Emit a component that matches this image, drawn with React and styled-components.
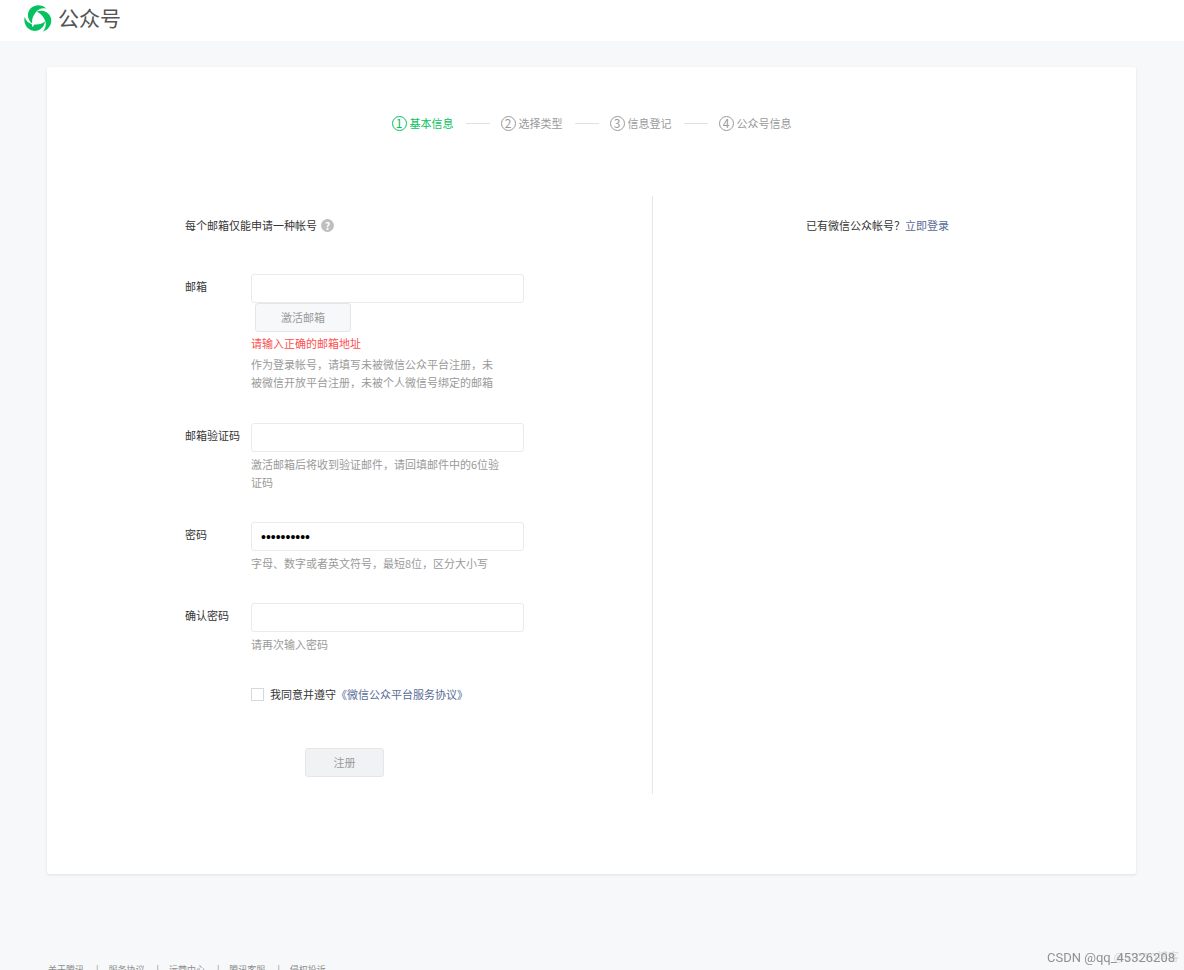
import styled, { createGlobalStyle, css } from 'styled-components';
import { useState } from 'react';

const steps = ['基本信息', '选择类型', '信息登记', '公众号信息'];
const footerLinks = ['关于腾讯', '服务协议', '运营中心', '腾讯客服', '侵权投诉'];

const Logo = () => (
  <LogoMark viewBox='0 0 84 84' aria-hidden='true'>
    {
      [0, 120, 240].map(angle => (
        <path
          key={angle}
          transform={`rotate(${angle} 42 42)`}
          d='M38 20C56 13 74 21 80 37C86 55 76 74 56 80C66 70 68 56 62 44C56 31 49 24 38 20Z'
        />
      ))
    }
    <path d='M22 54L31 58L26 67Z' fill='#fff' />
  </LogoMark>
);

const Field = ({ id, label, type = 'text', hint, error, action, ...rest }) => (
  <Row>
    <Label htmlFor={id}>{label}</Label>
    <Control>
      <Input id={id} type={type} aria-invalid={!!error} {...rest} />
      {action && <ActivateButton type='button' disabled>{action}</ActivateButton>}
      {error && <ErrorText role='alert'>{error}</ErrorText>}
      <Hint>{hint}</Hint>
    </Control>
  </Row>
);

const App = () => {
  const [password, setPassword] = useState('0123456789');
  const [agreed, setAgreed] = useState(false);

  return (
    <Page>
      <GlobalStyle />
      <Header>
        <Logo />
        <Brand>公众号</Brand>
      </Header>

      <Card>
        <Steps>
          {
            steps.map((name, index) => (
              <Step key={name} $active={index === 0}>
                <StepNumber>{index + 1}</StepNumber>
                {name}
              </Step>
            ))
          }
        </Steps>

        <Columns>
          <FormColumn onSubmit={(e) => e.preventDefault()}>
            <Intro>
              每个邮箱仅能申请一种帐号
              <HelpButton type='button' aria-label='帮助'>?</HelpButton>
            </Intro>

            <Field
              id='email'
              label='邮箱'
              action='激活邮箱'
              error='请输入正确的邮箱地址'
              hint='作为登录帐号，请填写未被微信公众平台注册，未被微信开放平台注册，未被个人微信号绑定的邮箱'
            />
            <Field
              id='code'
              label='邮箱验证码'
              hint='激活邮箱后将收到验证邮件，请回填邮件中的6位验证码'
            />
            <Field
              id='password'
              label='密码'
              type='password'
              value={password}
              onChange={(e) => setPassword(e.target.value)}
              hint='字母、数字或者英文符号，最短8位，区分大小写'
            />
            <Field
              id='confirm'
              label='确认密码'
              type='password'
              hint='请再次输入密码'
            />

            <Agreement>
              <Checkbox
                id='agree'
                type='checkbox'
                checked={agreed}
                onChange={(e) => setAgreed(e.target.checked)}
              />
              <label htmlFor='agree'>我同意并遵守</label>
              <Link href='#agreement'>《微信公众平台服务协议》</Link>
            </Agreement>
            <SubmitButton type='submit' disabled={!agreed}>注册</SubmitButton>
          </FormColumn>

          <LoginColumn>
            已有微信公众帐号？<Link href='#login'>立即登录</Link>
          </LoginColumn>
        </Columns>
      </Card>

      <Footer>
        {footerLinks.map(name => <FooterLink key={name} href='#footer'>{name}</FooterLink>)}
      </Footer>

      <Watermark>
        <WatermarkBack>@51CTO博客</WatermarkBack>
        CSDN @qq_45326208
      </Watermark>
    </Page>
  );
};

export default App;

const GlobalStyle = createGlobalStyle`
  * {
    box-sizing: border-box;
  }

  body {
    margin: 0;
    background-color: #f6f8f9;
    color: #353535;
    font-family: 'Noto Sans CJK SC', sans-serif;
    font-size: 11px;
    line-height: 18px;
  }

  button, input {
    font: inherit;
  }

  p {
    margin: 0;
  }
`;

const Page = styled.div`
  height: 100vh;
  overflow-y: auto;
  scrollbar-width: none;
`;

const Header = styled.header`
  display: flex;
  align-items: center;
  gap: 6px;
  height: 41px;
  padding: 0 24px 4px;
  background-color: #fff;
`;

const LogoMark = styled.svg`
  width: 28px;
  height: 28px;
  fill: #07c160;
`;

const Brand = styled.span`
  padding-bottom: 3px;
  color: #555;
  font-size: 21px;
  line-height: 28px;
`;

const Card = styled.main`
  margin: 26px 48px 0 47px;
  padding: 47px 0 80px;
  border-radius: 2px;
  background-color: #fff;
  box-shadow: 0 1px 3px rgba(0, 0, 0, 0.1);
`;

const Steps = styled.ol`
  display: flex;
  justify-content: center;
  margin: 0;
  padding: 0;
  list-style: none;
`;

const Step = styled.li`
  display: flex;
  align-items: center;
  gap: 3px;
  color: ${({ $active }) => ($active ? '#07c160' : '#9a9a9a')};

  &:not(:first-child)::before {
    content: '';
    width: 24px;
    margin: 0 8px 0 12px;
    border-top: 1px solid #e0e1e2;
  }
`;

const StepNumber = styled.span`
  display: flex;
  justify-content: center;
  align-items: center;
  width: 15px;
  height: 15px;
  border: 1px solid currentColor;
  border-radius: 50%;
  font-size: 12px;
  line-height: 12px;
`;

const Columns = styled.div`
  display: grid;
  grid-template-columns: 5fr 4fr;
  margin-top: 64px;
`;

const FormColumn = styled.form`
  padding: 20px 0 17px 138px;
`;

const LoginColumn = styled.aside`
  padding: 20px 0 0 153px;
  border-left: 1px solid #e7e7eb;
`;

const Intro = styled.div`
  display: flex;
  align-items: center;
  gap: 4px;
  margin-bottom: 40px;
`;

const HelpButton = styled.button`
  width: 13px;
  height: 13px;
  padding: 0;
  border: 0;
  border-radius: 50%;
  background-color: #bfbfbf;
  color: #fff;
  font-size: 10px;
  font-weight: 700;
  line-height: 13px;
`;

const Row = styled.div`
  display: flex;
  margin-bottom: 31px;
`;

const Label = styled.label`
  flex: none;
  width: 66px;
  padding-top: 3px;
`;

const Control = styled.div`
  display: flex;
  flex-direction: column;
  align-items: flex-start;
  width: 273px;
`;

const Input = styled.input`
  width: 100%;
  height: 29px;
  padding: 0 9px;
  border: 1px solid #e9eaec;
  border-radius: 3px;
  background-color: #fff;
  color: #000;
  font-family: 'Liberation Sans', 'Noto Sans CJK SC', sans-serif;
  font-size: 14px;
  outline: none;
`;

const buttonStyle = css`
  height: 29px;
  padding: 0 0 2px;
  border: 1px solid #e4e6e9;
  border-radius: 3px;
  color: #9a9a9a;
`;

const ActivateButton = styled.button`
  ${buttonStyle}
  width: 96px;
  margin-left: 4px;
  background-color: #f6f8f9;
`;

const ErrorText = styled.p`
  margin-top: 2px;
  color: #fa5151;
`;

const Hint = styled.p`
  max-width: 250px;
  margin-top: 3px;
  color: #9a9a9a;

  ${ErrorText} + & {
    padding-bottom: 1px;
  }
`;

const Agreement = styled.div`
  display: flex;
  align-items: center;
  height: 20px;
  margin: 0 0 44px 66px;
`;

const Checkbox = styled.input`
  appearance: none;
  width: 13px;
  height: 13px;
  margin: 0 6px 0 0;
  border: 1px solid #d5d8dd;
  background-color: #fff;

  &:checked {
    background-color: #07c160;
  }
`;

const Link = styled.a`
  color: #576b95;
  text-decoration: none;
`;

const SubmitButton = styled.button`
  ${buttonStyle}
  display: block;
  width: 79px;
  margin-left: 120px;
  background-color: #f1f2f4;
`;

const Footer = styled.footer`
  display: flex;
  padding: 87px 48px 24px;
`;

const FooterLink = styled.a`
  color: #8d8d8d;
  font-size: 9px;
  text-decoration: none;

  & + &::before {
    content: '|';
    margin: 0 10px 0 12px;
  }
`;

const Watermark = styled.div`
  position: fixed;
  right: 9px;
  bottom: 3px;
  color: #8f9193;
  font-family: Roboto, 'Noto Sans CJK SC', sans-serif;
  font-size: 13px;
`;

const WatermarkBack = styled.span`
  position: absolute;
  right: -4px;
  bottom: 0;
  z-index: -1;
  color: #d4d6d8;
  font-size: 11px;
  white-space: nowrap;
`;
